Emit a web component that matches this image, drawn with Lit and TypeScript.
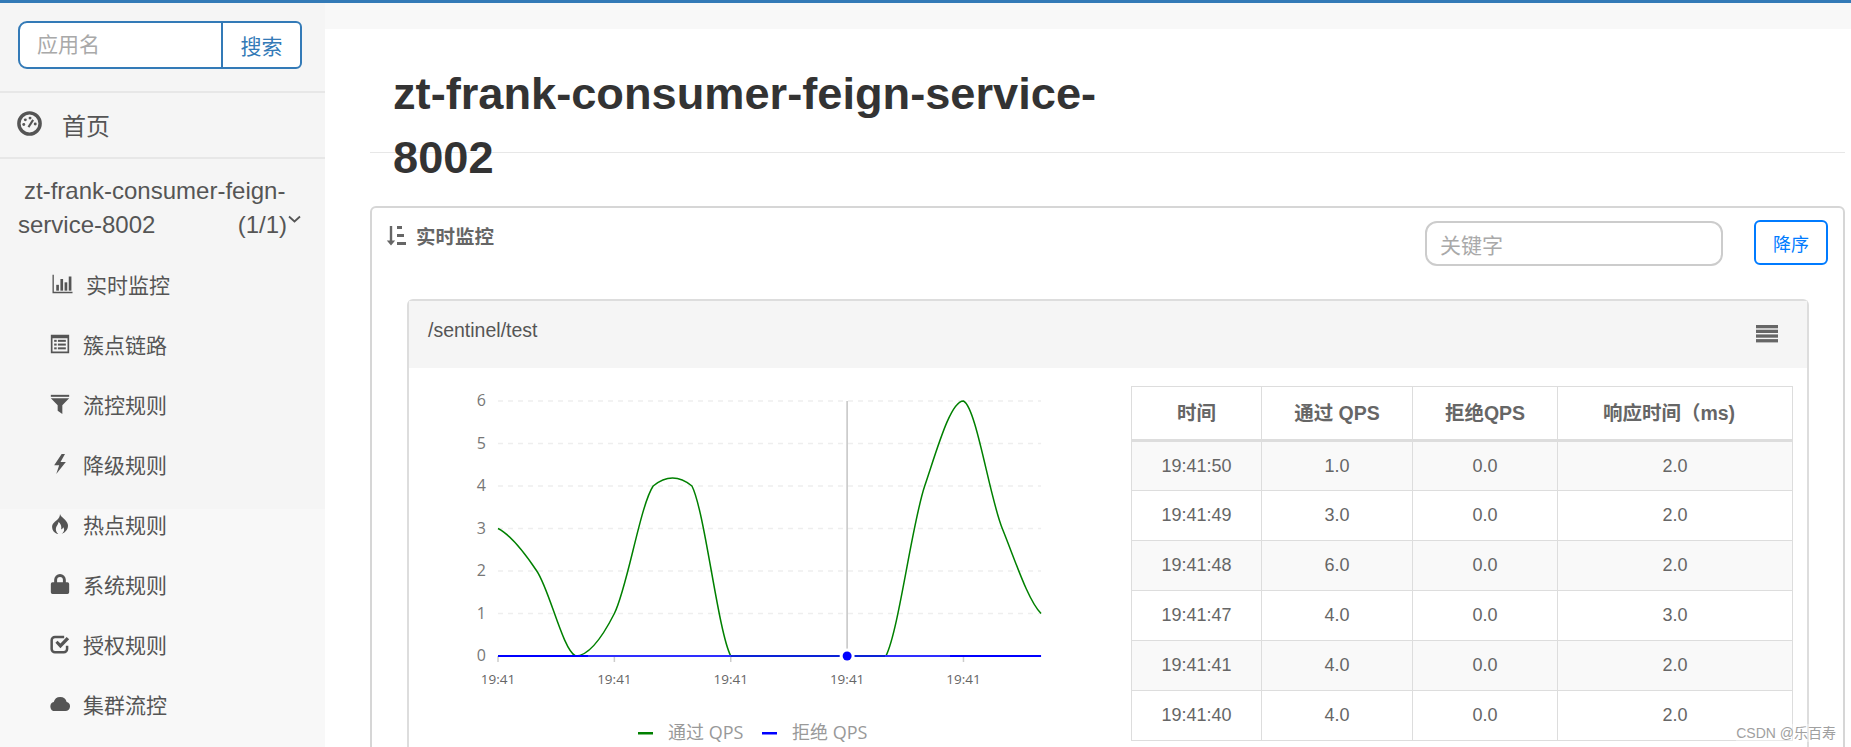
import { LitElement, html, css, svg } from "lit";
import { customElement } from "lit/decorators.js";

const SANS = css`"Liberation Sans", "Noto Sans CJK SC", sans-serif`;
const CHART = css`"Open Sans", "Noto Sans CJK SC", sans-serif`;

const ic = (body: unknown, vb = "0 0 24 24") =>
  html`<svg class="ic" viewBox="${vb}" fill="currentColor">${body}</svg>`;

const ICONS: Record<string, unknown> = {
  bar: ic(svg`<path d="M0 1h1.600v20.400H24V23H0z"/><rect x="4.500" y="13" width="3.200" height="7"/><rect x="9.500" y="6" width="3.200" height="14"/><rect x="14.500" y="10" width="3.200" height="10"/><rect x="19.500" y="3" width="3.200" height="17"/>`),
  list: ic(svg`<path fill-rule="evenodd" d="M1 1h22v22H1zM3 5v16h18V5z"/><rect x="5" y="7" width="3" height="2.400"/><rect x="9.500" y="7" width="9.500" height="2.400"/><rect x="5" y="11.500" width="3" height="2.400"/><rect x="9.500" y="11.500" width="9.500" height="2.400"/><rect x="5" y="16" width="3" height="2.400"/><rect x="9.500" y="16" width="9.500" height="2.400"/>`),
  filter: ic(svg`<rect x="1" y="1" width="22" height="2.400"/><path d="M1 5h22l-8.200 8.600V24l-5.600-4v-6.400z"/>`),
  bolt: ic(svg`<path d="M14 0 5 13.500h6L7.500 24 19 9.500h-6.400L18 0z"/>`),
  fire: ic(svg`<path d="M12 0c1 4 8.500 7 9.500 13 .7 5-3 9.500-7.500 11 2.500-2 4-5 2-8-.6 1.500-1.500 2.200-2.800 2.500 1-3.500-.2-7-3-9-.1 3-3.200 5-3.200 8.500 0 2.500 1.300 5 3.500 6.500C5.500 23.500 2.500 19.500 2.500 15.500c0-4.500 4-6.500 6.500-9C10.500 5 12 3 12 0z"/>`),
  lock: ic(svg`<path fill-rule="evenodd" d="M5 10V7a7 7 0 0 1 14 0v3h2a2 2 0 0 1 2 2v10a2 2 0 0 1-2 2H3a2 2 0 0 1-2-2V12a2 2 0 0 1 2-2zM8.500 10h7V7a3.500 3.500 0 0 0-7 0z"/>`),
  check: ic(svg`<path fill="none" stroke="currentColor" stroke-width="3" d="M20.500 14v4a4 4 0 0 1-4 4H6a4 4 0 0 1-4-4V7.500a4 4 0 0 1 4-4h11"/><path d="M6.500 10.500 9 8l3.500 3.500L20 3.500l3 2.800L12.500 17z"/>`),
  cloud: ic(svg`<path d="M6 20.500a5.500 5.500 0 0 1-1.500-10.800A8 8 0 0 1 20 9.500a5.500 5.500 0 0 1 4 5.500 5.500 5.500 0 0 1-5.500 5.500z"/>`),
};

const NAV = [
  ["实时监控", "bar", "first"],
  ["簇点链路", "list", ""],
  ["流控规则", "filter", ""],
  ["降级规则", "bolt", ""],
  ["热点规则", "fire", ""],
  ["系统规则", "lock", ""],
  ["授权规则", "check", ""],
  ["集群流控", "cloud", ""],
];

const ROWS = [
  ["19:41:50", "1.0", "0.0", "2.0"],
  ["19:41:49", "3.0", "0.0", "2.0"],
  ["19:41:48", "6.0", "0.0", "2.0"],
  ["19:41:47", "4.0", "0.0", "3.0"],
  ["19:41:41", "4.0", "0.0", "2.0"],
  ["19:41:40", "4.0", "0.0", "2.0"],
];

const QPS = [3, 2, 0, 1, 4, 4, 0, 0, 0, 0, 0, 4, 6, 3, 1];
const X0 = 89, XSTEP = 38.79, Y0 = 288, YSTEP = 42.5;
const px = (i: number) => X0 + i * XSTEP;
const py = (v: number) => Y0 - v * YSTEP;

function curve(): string {
  const n = QPS.length;
  const k = 0.15;
  const lim = (v: number, a: number, b: number) =>
    Math.min(6, Math.min(Math.max(a, b) + 0.25, Math.max(Math.min(a, b) === 0 ? 0 : Math.min(a, b) - 0.25, v)));
  let d = `M${px(0)} ${py(QPS[0])}`;
  for (let i = 0; i < n - 1; i++) {
    const a = QPS[Math.max(i - 1, 0)], b = QPS[i], c = QPS[i + 1], e = QPS[Math.min(i + 2, n - 1)];
    const c1 = lim(b + (c - a) * k, b, c);
    const c2 = lim(c - (e - b) * k, b, c);
    d += ` C${px(i) + XSTEP / 3} ${py(c1)} ${px(i + 1) - XSTEP / 3} ${py(c2)} ${px(i + 1)} ${py(c)}`;
  }
  return d;
}

@customElement("app-root")
export class AppRoot extends LitElement {
  static styles = css`
    :host {
      display: block;
      height: 747px;
      overflow: hidden;
      position: relative;
      box-sizing: border-box;
      border-top: 3px solid #337ab7;
      background: #f8f8f8;
      font-family: ${SANS};
      color: #555;
    }
    * { box-sizing: border-box; }
    .layout { display: flex; height: 744px; }
    .side { width: 325px; flex: none; background: linear-gradient(#f5f5f5 506px, #f8f8f8 506px); }
    .search { padding: 18px 23px 0 18px; height: 90px; border-bottom: 2px solid #e7e7e7; }
    .search-box {
      display: flex; height: 48px; border: 2px solid #337ab7; border-radius: 9px 6px 6px 9px;
      background: #fff; font-size: 21px;
    }
    .search-input { width: 203px; flex: none; padding: 0 0 4px 17px; display: flex; align-items: center; color: #a9a9a9; border-right: 2px solid #337ab7; }
    .search-btn { flex: 1; display: flex; align-items: center; justify-content: center; color: #337ab7; }
    .home { height: 66px; border-bottom: 2px solid #e7e7e7; display: flex; align-items: center; padding: 0 0 2px 17px; font-size: 24px; }
    .home svg { width: 25px; height: 25px; margin: -2px 20px 0 0; color: #555; flex: none; }
    .app { padding: 15px 24px 0 18px; font-size: 24px; line-height: 34px; }
    .app-1 { padding-left: 6px; white-space: nowrap; }
    .app-2 { display: flex; justify-content: space-between; position: relative; }
    .app-2 svg { width: 13px; height: 8px; flex: none; margin: 7px 0 0 1px; }
    .app-2 .count { margin-left: auto; }
    .nav { font-size: 21px; padding-top: 12px; }
    .nav-item { height: 60px; display: flex; align-items: center; padding-left: 50px; }
    .ic { width: 20px; height: 20px; flex: none; margin-right: 13px; color: #555; }
    .nav-item.first .ic { width: 25px; height: 20px; margin-right: 11px; }
    .nav-item .label { margin-top: -1px; }
    .main { flex: 1; min-width: 0; padding: 26px 0 0 0; }
    .main-in { background: #fff; padding-left: 45px; height: 100%; }
    .head { height: 124px; margin: 0 6px 0 0; border-bottom: 1px solid #e7e7e7; }
    .head h1 {
      margin: 0; width: 750px; padding: 33px 0 0 23px; font-size: 45.200px; line-height: 64px; font-weight: 700; color: #333;
    }
    .card {
      margin: 53px 6px 0 0; height: 700px; border: 2px solid #d6d6d6; border-radius: 6px 6px 0 0;
      padding: 12px 34px 0 35px;
    }
    .card-bar { display: flex; align-items: flex-start; height: 79px; margin: 0 -19px 0 -21px; }
    .card-title { display: flex; align-items: center; font-size: 19.500px; font-weight: 700; margin-top: 1px; color: #666; }
    .card-title svg { width: 20px; height: 21px; margin-right: 10px; }
    .kw {
      margin-left: auto; width: 298px; height: 45px; margin-top: 1px; border: 2px solid #ccc; border-radius: 12px;
      padding: 0 0 0 13px; display: flex; align-items: center; font-size: 21px; color: #a9a9a9;
    }
    .order {
      margin-left: 31px; width: 74px; height: 45px; border: 2px solid #007bff; border-radius: 6px; color: #007bff;
      display: flex; align-items: center; justify-content: center; font-size: 18px;
    }
    .panel { border: 2px solid #ddd; border-bottom: none; border-radius: 6px 6px 0 0; height: 500px; }
    .panel-head {
      height: 67px; background: #f5f5f5; display: flex; align-items: flex-start; justify-content: space-between;
      padding: 18px 29px 0 19px; font-size: 19.500px; color: #555;
    }
    .panel-head svg { width: 22px; height: 18px; margin-top: 6px; color: #666; }
    .panel-body { display: flex; align-items: flex-start; }
    .chart { width: 722px; height: 380px; flex: none; display: block; }
    .chart text { font-family: ${CHART}; }
    .ty { font-size: 16px; fill: #777; text-anchor: end; }
    .tx { font-size: 13.500px; fill: #666; text-anchor: middle; }
    .tl { font-size: 18px; fill: #999; }
    table {
      border-collapse: collapse; width: 661px; margin-top: 18px; table-layout: fixed; font-size: 18px; color: #666; text-align: center;
    }
    th, td { border: 1px solid #ddd; padding: 0; }
    th { height: 54px; padding-bottom: 4px; font-size: 19.500px; font-weight: 700; border-bottom: 3px solid #ddd; color: #666; }
    th.wide { padding-right: 12px; }
    td { height: 50px; }
    tbody tr:nth-child(odd) td { background: #f9f9f9; }
    .mark {
      position: absolute; right: 15px; bottom: 5px; font-size: 14px; color: #a0a0a0; background: rgba(255, 255, 255, 0.35); line-height: 18px;
    }
  `;

  private renderChart() {
    const grid = [1, 2, 3, 4, 5, 6];
    const ticks = [0, 3, 6, 9, 12];
    const L = px(0), R = px(14);
    return svg`
      ${grid.map((v) => svg`<line x1="${L}" x2="${R}" y1="${py(v)}" y2="${py(v)}" stroke="#eee" stroke-width="1.500" stroke-dasharray="5 5"/>`)}
      ${[0, 1, 2, 3, 4, 5, 6].map((v) => svg`<text class="ty" x="${L - 12}" y="${py(v) + 5}">${v}</text>`)}
      ${ticks.filter((i) => i !== 9).map((i) => svg`<line x1="${px(i)}" x2="${px(i)}" y1="${Y0}" y2="${Y0 + 6}" stroke="#ccc" stroke-width="1.500"/>`)}
      ${ticks.map((i) => svg`<text class="tx" x="${px(i)}" y="${Y0 + 28}">19:41</text>`)}
      <line x1="${px(9)}" x2="${px(9)}" y1="${py(6)}" y2="${Y0}" stroke="#c4c4c4" stroke-width="1.500"/>
      <path d="${curve()}" fill="none" stroke="#008000" stroke-width="1.500"/>
      <line x1="${L}" x2="${R}" y1="${Y0}" y2="${Y0}" stroke="#0000ff" stroke-width="2"/>
      <line x1="179" x2="541" y1="${Y0}" y2="${Y0}" stroke="#2e2eff" stroke-width="2"/>
      <line x1="322" x2="476" y1="${Y0}" y2="${Y0}" stroke="#0a22d6" stroke-width="2"/>
      <circle cx="${px(9)}" cy="${Y0}" r="7.500" fill="#fff"/>
      <circle cx="${px(9)}" cy="${Y0}" r="4.500" fill="#0000ff"/>
      <rect x="229" y="364" width="15" height="2.500" fill="#008000"/>
      <text class="tl" x="259" y="371">通过 QPS</text>
      <rect x="353" y="364" width="15" height="2.500" fill="#0000ff"/>
      <text class="tl" x="383" y="371">拒绝 QPS</text>
    `;
  }

  render() {
    const item = (n: string[]) => html`<div class="nav-item ${n[2]}">${ICONS[n[1]]}<span class="label">${n[0]}</span></div>`;
    return html`
      <div class="layout">
        <aside class="side">
          <div class="search">
            <div class="search-box"><div class="search-input">应用名</div><div class="search-btn">搜索</div></div>
          </div>
          <div class="home">
            <svg viewBox="0 0 24 24" fill="none"><circle cx="12" cy="12" r="10.200" stroke="currentColor" stroke-width="3.300"/><circle cx="6.500" cy="13" r="1.400" fill="currentColor"/><circle cx="8" cy="8.500" r="1.400" fill="currentColor"/><circle cx="12.500" cy="6.800" r="1.400" fill="currentColor"/><circle cx="17.500" cy="12.500" r="1.400" fill="currentColor"/><path d="M11 15.500 15.500 8.500" stroke="currentColor" stroke-width="2"/></svg>
            首页
          </div>
          <div class="app">
            <div class="app-1">zt-frank-consumer-feign-</div>
            <div class="app-2"><span>service-8002</span><span class="count">(1/1)</span><svg viewBox="0 0 13 8" fill="none"><path d="M1 1.500 6.500 6.500 12 1.500" stroke="#555" stroke-width="1.800"/></svg></div>
          </div>
          <div class="nav">${NAV.map(item)}</div>
        </aside>
        <main class="main">
          <div class="main-in">
            <div class="head"><h1>zt-frank-consumer-feign-service-8002</h1></div>
            <section class="card">
              <div class="card-bar">
                <div class="card-title">
                  <svg viewBox="0 0 20 21" fill="currentColor"><path d="M3.800 1h2.400v14.500h3L5 20.500 .8 15.500h3z"/><rect x="11" y="1" width="5" height="3"/><rect x="11" y="9" width="7" height="3"/><rect x="11" y="17" width="9" height="3"/></svg>
                  实时监控
                </div>
                <div class="kw">关键字</div>
                <div class="order">降序</div>
              </div>
              <div class="panel">
                <div class="panel-head">
                  <span>/sentinel/test</span>
                  <svg viewBox="0 0 22 18" fill="currentColor"><rect y="0" width="22" height="3.300"/><rect y="4.700" width="22" height="3.300"/><rect y="9.400" width="22" height="3.300"/><rect y="14.100" width="22" height="3.300"/></svg>
                </div>
                <div class="panel-body">
                  <svg class="chart" viewBox="0 0 722 380">${this.renderChart()}</svg>
                  <table>
                    <colgroup><col style="width:130px"/><col style="width:151px"/><col style="width:145px"/><col style="width:235px"/></colgroup>
                    <thead><tr><th>时间</th><th>通过 QPS</th><th>拒绝QPS</th><th class="wide">响应时间（ms)</th></tr></thead>
                    <tbody>${ROWS.map((r) => html`<tr>${r.map((c) => html`<td>${c}</td>`)}</tr>`)}</tbody>
                  </table>
                </div>
              </div>
            </section>
          </div>
        </main>
      </div>
      <div class="mark">CSDN @乐百寿</div>
    `;
  }
}
